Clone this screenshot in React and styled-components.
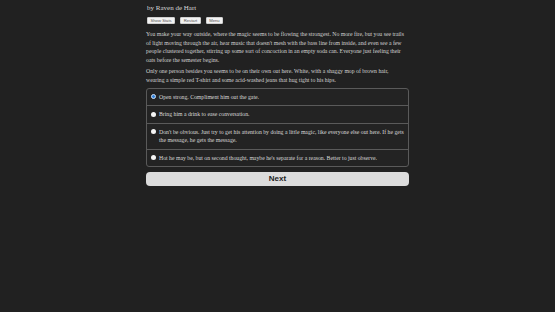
import styled, { createGlobalStyle } from "styled-components";

const GlobalStyle = createGlobalStyle`
  html, body {
    margin: 0;
    padding: 0;
    background: #212121;
  }
  body {
    font-family: "Liberation Serif", "Times New Roman", serif;
    color: #d6d6d6;
  }
`;

const choices = [
  "Open strong. Compliment him out the gate.",
  "Bring him a drink to ease conversation.",
  "Don't be obvious. Just try to get his attention by doing a little magic, like everyone else out here. If he gets the message, he gets the message.",
  "Hot he may be, but on second thought, maybe he's separate for a reason. Better to just observe.",
];

export default function App() {
  return (
    <>
      <GlobalStyle />
      <Page>
        <Column>
          <Byline>by Raven de Hart</Byline>
          <Toolbar>
            <SmallButton>Show Stats</SmallButton>
            <SmallButton>Restart</SmallButton>
            <SmallButton>Menu</SmallButton>
          </Toolbar>
          <Paragraph>
            You make your way outside, where the magic seems to be flowing the strongest. No more fire, but you see trails
            of light moving through the air, hear music that doesn't mesh with the bass line from inside, and even see a few
            people clustered together, stirring up some sort of concoction in an empty soda can. Everyone just feeling their
            oats before the semester begins.
          </Paragraph>
          <Paragraph>
            Only one person besides you seems to be on their own out here. White, with a shaggy mop of brown hair,
            <br />
            wearing a simple red T-shirt and some acid-washed jeans that hug tight to his hips.
          </Paragraph>
          <ChoiceList>
            {choices.map((text, i) => (
              <Choice key={i} $first={i === 0}>
                <Radio $checked={i === 0} />
                <span>{text}</span>
              </Choice>
            ))}
          </ChoiceList>
          <NextButton>Next</NextButton>
        </Column>
      </Page>
    </>
  );
}

const Page = styled.div`
  display: flex;
  justify-content: center;
  min-height: 312px;
  background: #212121;
`;

const Column = styled.div`
  width: 263px;
  padding-top: 3px;
`;

const Byline = styled.div`
  font-size: 7px;
  line-height: 9px;
  margin-top: 1px;
  color: #d8d8d8;
  padding-left: 1px;
`;

const Toolbar = styled.div`
  display: flex;
  gap: 5px;
  margin-top: 4px;
  padding-left: 1px;
`;

const SmallButton = styled.button`
  font-family: "Liberation Sans", Arial, sans-serif;
  font-size: 4.2px;
  line-height: 4px;
  height: 7px;
  padding: 0 2.5px;
  background: #f2f2f2;
  color: #555;
  border: 1px solid #cfcfcf;
  border-radius: 1px;
`;

const Paragraph = styled.p`
  margin: 6px 0 0;
  font-size: 5.75px;
  line-height: 8.5px;
  color: #d2d2d2;
  & + & {
    margin-top: 3px;
  }
`;

const ChoiceList = styled.div`
  margin-top: 3.5px;
  border: 1px solid #5a5a5a;
  border-radius: 3px;
  background: #232323;
`;

const Choice = styled.div`
  display: flex;
  align-items: flex-start;
  gap: 3px;
  padding: 4px 4px 4px 4px;
  font-size: 5.75px;
  line-height: 8.5px;
  color: #d8d8d8;
  border-top: ${({ $first }) => ($first ? "none" : "1px solid #5a5a5a")};
`;

const Radio = styled.span`
  flex: none;
  width: 5px;
  height: 5px;
  margin-top: 1.8px;
  border-radius: 50%;
  box-sizing: border-box;
  background: ${({ $checked }) => ($checked ? "#2f7fd8" : "#f4f4f4")};
  border: ${({ $checked }) => ($checked ? "1.2px solid #cfe0f5" : "none")};
`;

const NextButton = styled.button`
  display: block;
  width: 100%;
  margin-top: 4.5px;
  height: 14px;
  background: #dcdcdc;
  color: #222;
  border: none;
  border-radius: 4px;
  font-family: "Liberation Sans", Arial, sans-serif;
  font-weight: bold;
  font-size: 8px;
  line-height: 14px;
  padding: 0;
`;
